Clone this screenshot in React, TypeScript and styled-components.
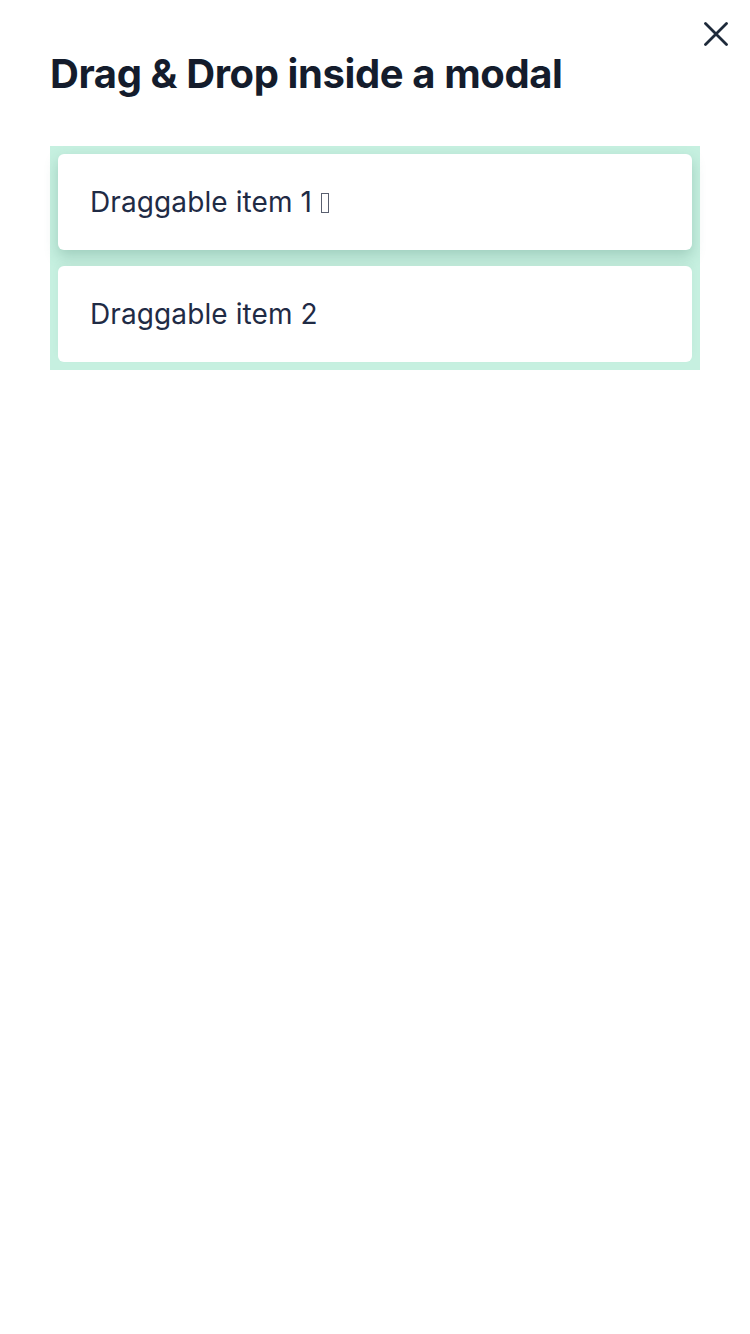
import React from "react";
import styled, { createGlobalStyle } from "styled-components";

const Global = createGlobalStyle`
  html, body { margin: 0; padding: 0; background: #ffffff; }
  body { font-family: Inter, "Noto Sans", sans-serif; }
`;

const Modal = styled.div`
  position: relative;
  width: 750px;
  min-height: 1334px;
  box-sizing: border-box;
  padding: 50px 50px 0 50px;
  background: #ffffff;
`;

const CloseButton = styled.button`
  position: absolute;
  top: 20px;
  right: 20px;
  width: 28px;
  height: 28px;
  padding: 0;
  border: none;
  background: transparent;
  display: flex;
  align-items: center;
  justify-content: center;
  cursor: pointer;
`;

const Title = styled.h1`
  margin: 0 0 48px 0;
  font-family: Inter, "Noto Sans", sans-serif;
  font-size: 40px;
  line-height: 48px;
  font-weight: 700;
  color: #141c2c;
  letter-spacing: -0.4px;
`;

const DropZone = styled.div`
  background: #c6f0e0;
  padding: 8px;
  display: flex;
  flex-direction: column;
  gap: 16px;
`;

const Item = styled.div<{ $dragging?: boolean }>`
  height: 96px;
  box-sizing: border-box;
  padding: 0 32px;
  display: flex;
  align-items: center;
  background: #ffffff;
  border-radius: 6px;
  font-size: 28px;
  letter-spacing: 0.1px;
  color: #1f2b45;
  box-shadow: ${(p) =>
    p.$dragging
      ? "0 6px 14px rgba(60, 120, 100, 0.28)"
      : "0 -4px 10px rgba(0, 0, 0, 0.03)"};
`;

const Label = styled.span`
  display: inline-flex;
  align-items: baseline;
`;

const MissingGlyph = styled.span`
  display: inline-block;
  width: 6px;
  height: 18px;
  margin-left: 9px;
  border: 1px solid #5a6070;
  box-sizing: content-box;
  transform: translateY(1px);
`;

export default function App() {
  return (
    <>
      <Global />
      <Modal>
        <CloseButton aria-label="Close">
          <svg width="24" height="24" viewBox="0 0 24 24">
            <path
              d="M1.5 1.5 L22.5 22.5 M22.5 1.5 L1.5 22.5"
              stroke="#1e2a3a"
              strokeWidth="2.8"
              strokeLinecap="round"
            />
          </svg>
        </CloseButton>
        <Title>Drag &amp; Drop inside a modal</Title>
        <DropZone>
          <Item $dragging>
            <Label>
              Draggable item 1
              <MissingGlyph aria-hidden="true" />
            </Label>
          </Item>
          <Item>
            <Label>Draggable item 2</Label>
          </Item>
        </DropZone>
      </Modal>
    </>
  );
}
